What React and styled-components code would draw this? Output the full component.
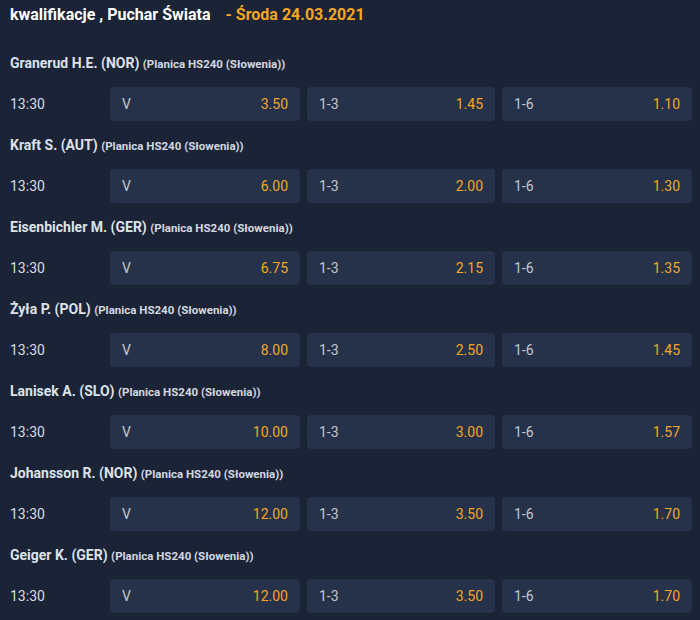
import React from "react";
import styled, { createGlobalStyle } from "styled-components";

const GlobalStyle = createGlobalStyle`
  html, body {
    margin: 0;
    padding: 0;
    background: #1b2336;
  }
  body {
    font-family: Roboto, "Liberation Sans", Arial, sans-serif;
  }
`;

const Page = styled.div`
  width: 700px;
  height: 620px;
  overflow: hidden;
  background: #1b2336;
  box-sizing: border-box;
  padding: 5px 8px 0 10px;
`;

const Title = styled.h1`
  margin: 0;
  font-size: 16px;
  font-weight: 700;
  color: #ffffff;
  line-height: 20px;
  height: 20px;
`;

const DateText = styled.span`
  color: #f5a623;
  font-weight: 700;
  margin-left: 11px;
`;

const Event = styled.div`
  padding-top: 16px;
  &:first-of-type {
    padding-top: 30px;
  }
`;

const NameLine = styled.div`
  font-size: 14px;
  font-weight: 700;
  color: #dde2ea;
  line-height: 16px;
  height: 16px;
  margin-bottom: 16px;
  white-space: nowrap;
`;

const Venue = styled.span`
  font-size: 11.5px;
  font-weight: 700;
  color: #d3d8e0;
`;

const OddsRow = styled.div`
  display: grid;
  grid-template-columns: 93px 190px 188px 190px;
  column-gap: 7px;
  align-items: center;
`;

const Time = styled.div`
  font-size: 14px;
  color: #d8dde5;
`;

const Pick = styled.div`
  height: 34px;
  background: #263249;
  border-radius: 4px;
  display: flex;
  align-items: center;
  justify-content: space-between;
  padding: 0 12px;
  font-size: 14px;
`;

const Label = styled.span`
  color: #c2c8d2;
`;

const Odd = styled.span`
  color: #f5a623;
`;

const EVENTS = [
  { name: "Granerud H.E. (NOR)", odds: ["3.50", "1.45", "1.10"] },
  { name: "Kraft S. (AUT)", odds: ["6.00", "2.00", "1.30"] },
  { name: "Eisenbichler M. (GER)", odds: ["6.75", "2.15", "1.35"] },
  { name: "Żyła P. (POL)", odds: ["8.00", "2.50", "1.45"] },
  { name: "Lanisek A. (SLO)", odds: ["10.00", "3.00", "1.57"] },
  { name: "Johansson R. (NOR)", odds: ["12.00", "3.50", "1.70"] },
  { name: "Geiger K. (GER)", odds: ["12.00", "3.50", "1.70"] },
];

const LABELS = ["V", "1-3", "1-6"];

const App = () => {
  return (
    <>
      <GlobalStyle />
      <Page>
        <Title>
          kwalifikacje , Puchar Świata <DateText>- Środa 24.03.2021</DateText>
        </Title>
        {EVENTS.map((ev) => (
          <Event key={ev.name}>
            <NameLine>
              {ev.name} <Venue>(Planica HS240 (Słowenia))</Venue>
            </NameLine>
            <OddsRow>
              <Time>13:30</Time>
              {ev.odds.map((o, i) => (
                <Pick key={i}>
                  <Label>{LABELS[i]}</Label>
                  <Odd>{o}</Odd>
                </Pick>
              ))}
            </OddsRow>
          </Event>
        ))}
      </Page>
    </>
  );
};

export default App;
